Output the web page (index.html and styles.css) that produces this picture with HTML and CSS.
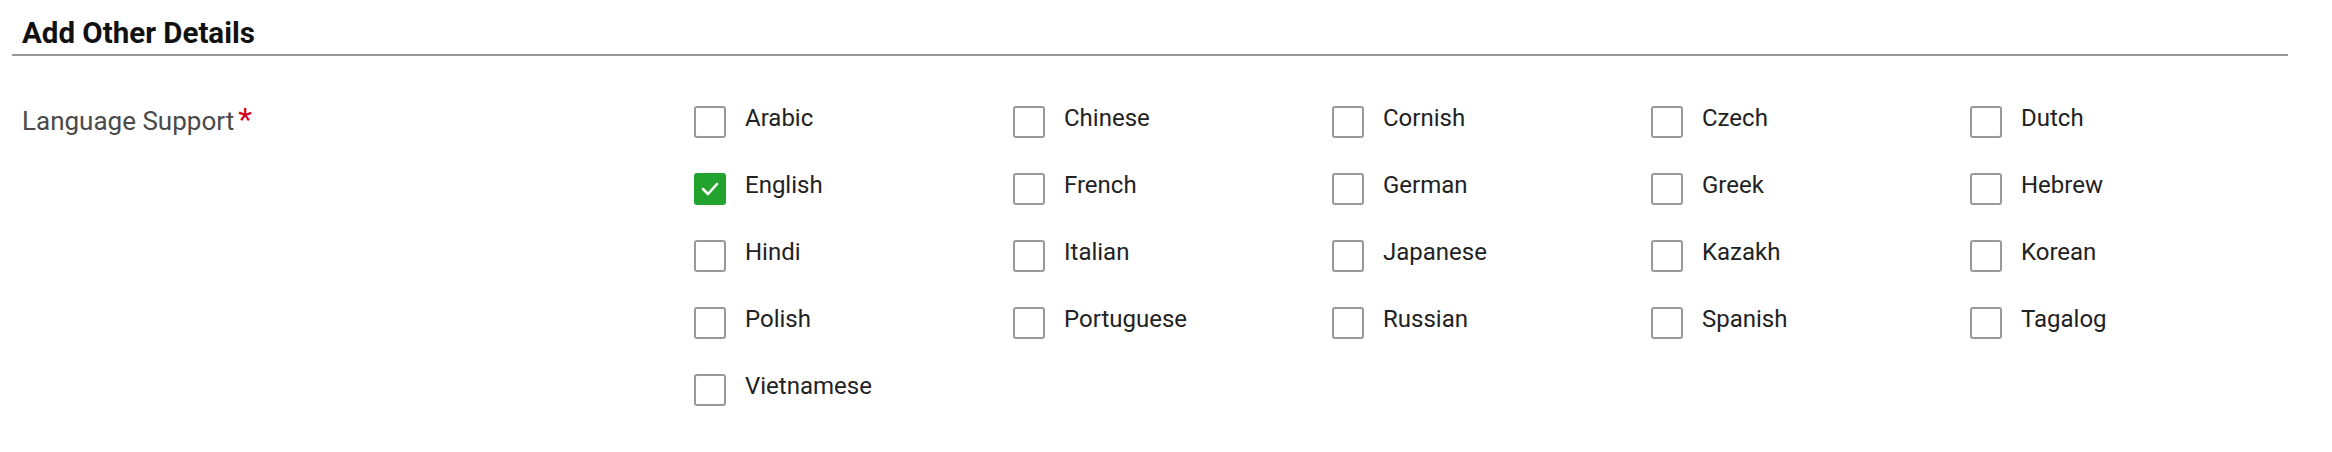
FILE: index.html
```html
<!DOCTYPE html>
<html>
<head>
<meta charset="utf-8">
<link rel="stylesheet" href="styles.css">
</head>
<body>
<div class="page">
  <h2 class="section-title">Add Other Details</h2>
  <div class="field">
    <div class="field-label">Language Support<span class="req">*</span></div>
    <div class="options">
      <label class="opt"><span class="box"></span><span class="txt">Arabic</span></label>
      <label class="opt"><span class="box"></span><span class="txt">Chinese</span></label>
      <label class="opt"><span class="box"></span><span class="txt">Cornish</span></label>
      <label class="opt"><span class="box"></span><span class="txt">Czech</span></label>
      <label class="opt"><span class="box"></span><span class="txt">Dutch</span></label>
      <label class="opt"><span class="box checked"><svg viewBox="0 0 32 32" width="32" height="32"><polyline points="9,16 14,21 23,11" fill="none" stroke="#fff" stroke-width="2.6" stroke-linecap="round" stroke-linejoin="round"/></svg></span><span class="txt">English</span></label>
      <label class="opt"><span class="box"></span><span class="txt">French</span></label>
      <label class="opt"><span class="box"></span><span class="txt">German</span></label>
      <label class="opt"><span class="box"></span><span class="txt">Greek</span></label>
      <label class="opt"><span class="box"></span><span class="txt">Hebrew</span></label>
      <label class="opt"><span class="box"></span><span class="txt">Hindi</span></label>
      <label class="opt"><span class="box"></span><span class="txt">Italian</span></label>
      <label class="opt"><span class="box"></span><span class="txt">Japanese</span></label>
      <label class="opt"><span class="box"></span><span class="txt">Kazakh</span></label>
      <label class="opt"><span class="box"></span><span class="txt">Korean</span></label>
      <label class="opt"><span class="box"></span><span class="txt">Polish</span></label>
      <label class="opt"><span class="box"></span><span class="txt">Portuguese</span></label>
      <label class="opt"><span class="box"></span><span class="txt">Russian</span></label>
      <label class="opt"><span class="box"></span><span class="txt">Spanish</span></label>
      <label class="opt"><span class="box"></span><span class="txt">Tagalog</span></label>
      <label class="opt"><span class="box"></span><span class="txt">Vietnamese</span></label>
    </div>
  </div>
</div>
</body>
</html>
```

FILE: styles.css
```css
html, body {
  margin: 0;
  padding: 0;
  background: #fff;
}
body {
  font-family: Roboto, "Liberation Sans", Arial, sans-serif;
}
.page {
  padding: 0 44px 0 12px;
}
.section-title {
  margin: 0;
  padding: 16px 0 4px 10px;
  font-size: 29.5px;
  line-height: 34px;
  font-weight: 700;
  color: #111;
  border-bottom: 2px solid #999;
}
.field {
  display: flex;
  padding-top: 50px;
}
.field-label {
  width: 682px;
  padding-left: 10px;
  padding-top: 3px;
  box-sizing: border-box;
  flex: none;
  font-size: 26px;
  line-height: 24px;
  color: #4a4a4a;
  display: flex;
  align-items: flex-start;
}
.req {
  color: #d0021b;
  font-size: 32px;
  line-height: 24px;
  margin-left: 4px;
  margin-top: -2px;
}
.options {
  display: grid;
  grid-template-columns: repeat(5, 319px);
  row-gap: 35px;
}
.opt {
  display: flex;
  align-items: flex-start;
  gap: 19px;
}
.box {
  width: 32px;
  height: 32px;
  box-sizing: border-box;
  border: 2px solid #999;
  border-radius: 3px;
  flex: none;
  display: block;
}
.box.checked {
  background: #21a32e;
  border-color: #21a32e;
  position: relative;
}
.box.checked svg {
  position: absolute;
  left: -2px;
  top: -2px;
}
.txt {
  font-size: 24px;
  line-height: 24px;
  color: #222;
}
```
